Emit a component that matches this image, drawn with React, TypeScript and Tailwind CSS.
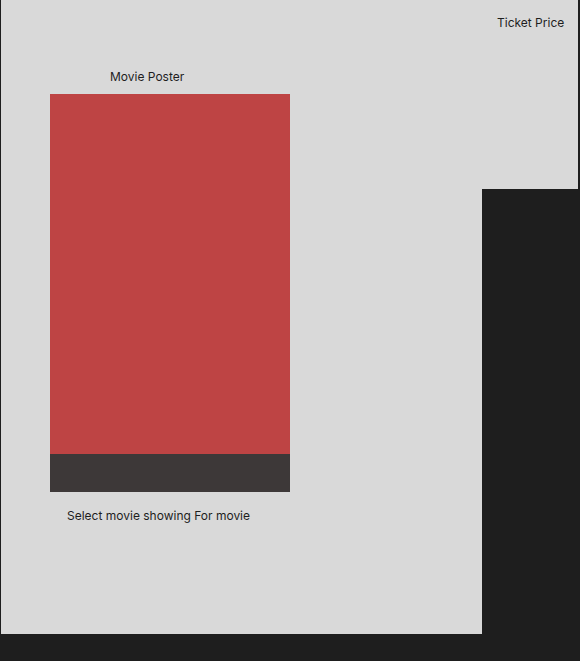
export default function App() {
  return (
    <div className="bg-[#1e1e1e] h-[661px] w-[580px] flex items-start font-['Inter',sans-serif] text-[12px] leading-[15px] text-[#1e1e1e]">
      <div className="ml-[1px] w-[481px] h-[634px] bg-[#d9d9d9] pt-[69px] pl-[49px]">
        <p className="ml-[60px]">Movie Poster</p>
        <div className="mt-[10px] w-[240px]">
          <div className="h-[360px] bg-[#be4444]" />
          <div className="h-[38px] bg-[#3d3838]" />
        </div>
        <p className="mt-[16px] ml-[17px]">Select movie showing For movie</p>
      </div>
      <div className="w-[96px] h-[189px] bg-[#d9d9d9] pt-[15px] pl-[15px]">
        <p className="whitespace-nowrap">Ticket Price</p>
      </div>
    </div>
  );
}
